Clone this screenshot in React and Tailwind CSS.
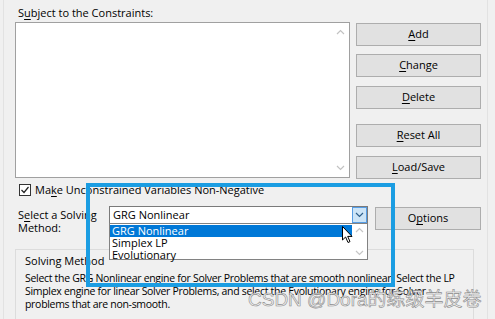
import React from 'react';

const FONT = { fontFamily: '"Open Sans", "Noto Sans", sans-serif' };

function Key({ children, k }) {
  // label with one underlined access key letter
  const i = children.indexOf(k);
  return (
    <>
      {children.slice(0, i)}
      <u className="underline-offset-[2px]">{k}</u>
      {children.slice(i + 1)}
    </>
  );
}

function Btn({ label, k, className = '' }) {
  return (
    <div
      className={`flex h-[23px] items-center justify-center border border-[#adadad] bg-[#e1e1e1] ${className}`}
    >
      <Key k={k}>{label}</Key>
    </div>
  );
}

function Chevron({ up, className = '' }) {
  return (
    <svg width="9" height="6" viewBox="0 0 9 6" className={className}>
      <polyline
        points={up ? '1,5 4.5,1.5 8,5' : '1,1 4.5,4.5 8,1'}
        fill="none"
        stroke="currentColor"
        strokeWidth="1.2"
      />
    </svg>
  );
}

export default function App() {
  return (
    <div
      className="relative h-[319px] w-[495px] overflow-hidden bg-[#f0f0f0] pl-[3px] text-[11px] text-black"
      style={FONT}
    >
      <div className="h-full w-[485px] border-x border-[#e2e2e2] pt-[5px]">
        {/* Constraints */}
        <div className="pl-[14px] leading-[15px]">
          <Key k="u">Subject to the Constraints:</Key>
        </div>
        <div className="mt-[2px] flex">
          <div className="relative ml-[11px] h-[156px] w-[335px] border border-[#a0a0a0] bg-white">
            <div className="absolute right-0 top-0 flex h-full w-[17px] flex-col items-center justify-between py-[6px] text-[#c2c2c2]">
              <Chevron up />
              <Chevron />
            </div>
          </div>
          <div className="ml-[6px] flex w-[125px] flex-col pt-[1px]">
            <Btn label="Add" k="A" />
            <Btn label="Change" k="C" className="mt-[8px]" />
            <Btn label="Delete" k="D" className="mt-[9px]" />
            <Btn label="Reset All" k="R" className="mt-[15px]" />
            <Btn label="Load/Save" k="L" className="mt-[9px]" />
          </div>
        </div>

        {/* Non-negative */}
        <div className="mt-[5px] flex h-[12px] items-center">
          <div className="ml-[15px] flex h-[12px] w-[12px] items-center justify-center border border-[#333] bg-white">
            <svg width="10" height="10" viewBox="0 0 10 10">
              <polyline points="1.5,5 4,7.5 8.5,2" fill="none" stroke="#222" strokeWidth="1.2" />
            </svg>
          </div>
          <span className="ml-[4px] leading-[12px]">
            <Key k="k">Make Unconstrained Variables Non-Negative</Key>
          </span>
        </div>

        {/* Solving method */}
        <div className="mt-[10px] flex h-[27px] items-start">
          <div className="ml-[14px] mt-[2px] w-[91px] shrink-0 whitespace-nowrap leading-[13px]">
            S<u className="underline-offset-[2px]">e</u>lect a Solving
            <br />
            Method:
          </div>
          <div className="relative flex h-[18px] w-[259px] items-center border border-[#7a7a7a] bg-white">
            <span className="pl-[3px]">GRG Nonlinear</span>
            <div className="ml-auto flex h-full w-[15px] items-center justify-center border border-[#569de5] bg-[#cce4f7] text-[#2e5f8a]">
              <Chevron />
            </div>
            {/* open list */}
            <div className="absolute left-[-1px] top-full z-10 flex h-[37px] w-[259px] border border-[#828282] bg-white leading-[12px]">
              <div className="flex flex-1 flex-col pt-[1px]">
                <div className="bg-[#0078d7] pl-[2px] text-white">GRG Nonlinear</div>
                <div className="pl-[2px]">Simplex LP</div>
                <div className="pl-[2px]">Evolutionary</div>
              </div>
              <div className="flex w-[15px] flex-col items-center justify-between py-[3px] text-[#c6c6c6]">
                <Chevron up />
                <Chevron />
              </div>
            </div>
          </div>
          <Btn label="Options" k="p" className="ml-[7px] mt-[1px] h-[22px] w-[106px]" />
        </div>

        <div className="ml-[11px] mt-[16px] h-[72px] w-[459px] border border-[#dcdcdc] pl-[9px] pt-[4px] leading-[13px]">
          <div>Solving Method</div>
          <div className="mt-[5px] whitespace-nowrap text-[10.5px] tracking-[-0.3px]">
            Select the GRG Nonlinear engine for Solver Problems that are smooth nonlinear. Select the LP
            <br />
            Simplex engine for linear Solver Problems, and select the Evolutionary engine for Solver
            <br />
            problems that are non-smooth.
          </div>
        </div>
      </div>

      {/* highlight frame */}
      <div className="pointer-events-none absolute left-[86px] top-[183px] z-20 h-[104px] w-[309px] border-[4px] border-[#1b9de2]" />

      {/* mouse pointer */}
      <svg
        className="absolute left-[342px] top-[226px] z-30"
        width="12"
        height="18"
        viewBox="0 0 12 18"
      >
        <path
          d="M0.5 0.5 L0.5 14 L3.6 11 L6 16.5 L8 15.6 L5.7 10.4 L10 10.4 Z"
          fill="#fff"
          stroke="#000"
          strokeWidth="1"
          strokeLinejoin="round"
        />
      </svg>

      {/* watermark */}
      <div
        className="absolute left-[248px] top-[288px] z-30 text-[19px] leading-[24px] text-[#f4f4f4] [-webkit-text-stroke:0.6px_#8c8c8c]"
        style={{ fontFamily: '"Liberation Sans", "Noto Sans CJK SC", sans-serif' }}
      >
        CSDN @Dora的练级羊皮卷
      </div>
    </div>
  );
}
